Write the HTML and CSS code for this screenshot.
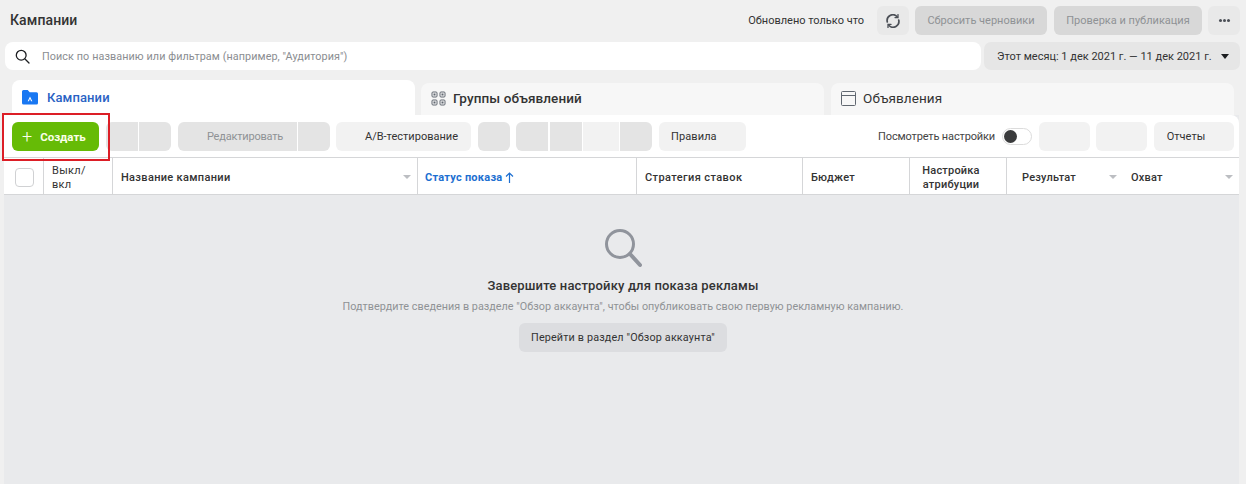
FILE: index.html
```html
<!DOCTYPE html>
<html lang="ru">
<head>
<meta charset="utf-8">
<title>Кампании</title>
<link rel="stylesheet" href="styles.css">
</head>
<body>
<header class="topbar">
  <h1 class="title">Кампании</h1>
  <div class="top-actions">
    <span class="updated">Обновлено только что</span>
    <button class="btn btn-soft btn-refresh" aria-label="Обновить">
      <svg width="14" height="14" viewBox="0 0 14 14" fill="none" stroke="#4b4f56" stroke-width="1.700" stroke-linecap="round"><path d="M1.300 8A5.800 5.800 0 0 1 11 2.500"/><path d="M12.700 6A5.800 5.800 0 0 1 3 11.500"/><path d="M12 .6v3H9" stroke-width="1.300"/><path d="M2 13.400v-3h3" stroke-width="1.300"/></svg>
    </button>
    <button class="btn btn-disabled btn-reset">Сбросить черновики</button>
    <button class="btn btn-disabled btn-publish">Проверка и публикация</button>
    <button class="btn btn-soft btn-more" aria-label="Ещё"><span class="dots"></span></button>
  </div>
</header>

<div class="searchrow">
  <div class="search">
    <svg class="search-icon" width="15" height="15" viewBox="0 0 15 15" fill="none" stroke="#1c1e21" stroke-width="1.300" stroke-linecap="round"><circle cx="6.200" cy="6.200" r="4.900"/><path d="M10 10l4 4"/></svg>
    <span class="search-text">Поиск по названию или фильтрам (например, "Аудитория")</span>
  </div>
  <div class="daterange">
    <span>Этот месяц: 1 дек 2021 г. — 11 дек 2021 г.</span>
    <span class="caret-dark"></span>
  </div>
</div>

<nav class="tabs">
  <div class="tab tab-active">
    <svg width="18" height="16" viewBox="0 0 18 16"><path d="M1 2.500A1.500 1.500 0 0 1 2.500 1h4.200l2 2.200h6.800A1.500 1.500 0 0 1 17 4.700v9.300a1.500 1.500 0 0 1-1.500 1.500h-13A1.500 1.500 0 0 1 1 14z" fill="#1877f2"/><path d="M9 7.500l2.300 4.800h-1.200l-1.100-2.500-1.100 2.500H6.700z" fill="#fff"/></svg>
    <span>Кампании</span>
  </div>
  <div class="tab tab-second">
    <svg width="15" height="15" viewBox="0 0 15 15" fill="none" stroke="#606770" stroke-width="1"><rect x="1" y="1" width="5" height="5" rx="1"/><rect x="9" y="1" width="5" height="5" rx="1"/><rect x="1" y="9" width="5" height="5" rx="1"/><rect x="9" y="9" width="5" height="5" rx="1"/><rect x="3" y="3" width="1" height="1" fill="#606770"/><rect x="11" y="3" width="1" height="1" fill="#606770"/><rect x="3" y="11" width="1" height="1" fill="#606770"/><rect x="11" y="11" width="1" height="1" fill="#606770"/></svg>
    <span>Группы объявлений</span>
  </div>
  <div class="tab tab-third">
    <svg width="15" height="15" viewBox="0 0 15 15" fill="none" stroke="#606770" stroke-width="1"><rect x=".5" y=".5" width="14" height="14" rx="1"/><path d="M1 4.500h13"/></svg>
    <span>Объявления</span>
  </div>
</nav>

<section class="panel">
  <div class="toolbar">
    <button class="btn btn-create"><span class="plus">+</span>Создать</button>
    <div class="group group-a"><span class="seg w32 dark"></span><span class="seg w32 dark"></span></div>
    <div class="group group-b"><button class="seg w119 dark seg-text">Редактировать</button><span class="seg w32 dark"></span></div>
    <button class="btn btn-light btn-ab">A/B-тестирование</button>
    <span class="seg w32 dark single"></span>
    <div class="group group-c"><span class="seg w32 dark"></span><span class="seg w32 dark seg-gap"></span><span class="seg w36 pale"></span><span class="seg w32 dark"></span></div>
    <button class="btn btn-light btn-rules">Правила</button>
    <div class="toolbar-right">
      <span class="view-label">Посмотреть настройки</span>
      <span class="toggle"><span class="knob"></span></span>
      <span class="seg w51 pale single slot-a"></span>
      <span class="seg w51 pale single slot-b"></span>
      <button class="btn btn-light btn-reports">Отчеты</button>
    </div>
  </div>

  <div class="thead">
    <div class="th th-check"><span class="checkbox"></span></div>
    <div class="th th-toggle">Выкл/<br>вкл</div>
    <div class="th th-name">Название кампании<span class="sort"></span></div>
    <div class="th th-status">Статус показа
      <svg width="9" height="11" viewBox="0 0 9 11" fill="none" stroke="#1d6fd1" stroke-width="1.200"><path d="M4.500 11V1M1 4.500l3.500-3.500 3.500 3.500"/></svg>
    </div>
    <div class="th th-strategy">Стратегия ставок</div>
    <div class="th th-budget">Бюджет</div>
    <div class="th th-attr">Настройка<br>атрибуции</div>
    <div class="th th-result">Результат<span class="sort"></span></div>
    <div class="th th-reach">Охват<span class="sort"></span></div>
  </div>

  <div class="empty">
    <svg class="empty-icon" width="38" height="40" viewBox="0 0 38 40" fill="none" stroke="#90949c" stroke-linecap="round"><circle cx="16" cy="16" r="13.500" stroke-width="3"/><path d="M26 26l10 11" stroke-width="4"/></svg>
    <h2 class="empty-title">Завершите настройку для показа рекламы</h2>
    <p class="empty-text">Подтвердите сведения в разделе "Обзор аккаунта", чтобы опубликовать свою первую рекламную кампанию.</p>
    <button class="btn btn-overview">Перейти в раздел "Обзор аккаунта"</button>
  </div>
  <div class="highlight"></div>
</section>
</body>
</html>
```
FILE: styles.css
```css
* { box-sizing: border-box; }
html, body { margin: 0; padding: 0; }
body {
  width: 1246px;
  height: 484px;
  overflow: hidden;
  background: #f0f0f0;
  font-family: Roboto, "Liberation Sans", Arial, sans-serif;
  font-size: 11px;
  color: #1c1e21;
  position: relative;
}
button { font: inherit; border: 0; padding: 0; }
.btn { display: inline-flex; align-items: center; justify-content: center; height: 29px; border-radius: 6px; }

.topbar { height: 42px; display: flex; align-items: flex-start; justify-content: space-between; padding: 6px 6px 0 10px; }
.title { margin: 5px 0 0; font-size: 14px; line-height: 18px; font-weight: 500; color: #333; letter-spacing: .1px; }
.top-actions { display: flex; align-items: center; height: 29px; }
.updated { font-size: 11px; color: #333; margin-right: 13px; }
.btn-soft { background: #e9e9e9; width: 32px; }
.btn-refresh { margin-right: 6px; }
.btn-disabled { background: #d8d8d8; color: #8f9295; }
.btn-reset { width: 132px; margin-right: 7px; }
.btn-publish { width: 148px; margin-right: 6px; }
.dots { width: 3px; height: 3px; border-radius: 50%; background: #4b4f56; box-shadow: -4px 0 #4b4f56, 4px 0 #4b4f56; }

.searchrow { display: flex; padding: 0 6px 0 5px; gap: 3px; height: 28px; }
.search { width: 976px; background: #fff; border-radius: 8px; display: flex; align-items: center; padding-left: 10px; }
.search-text { margin-left: 12px; color: #8a8d91; font-size: 10.800px; letter-spacing: .09px; }
.daterange { flex: 1; background: #e6e6e6; border-radius: 7px; display: flex; align-items: center; padding-left: 13px; color: #333; font-size: 11px; }
.caret-dark { margin-left: 9px; border: 4.500px solid transparent; border-top: 5px solid #1c1e21; border-bottom: 0; }

.tabs { display: flex; align-items: flex-start; height: 45px; padding: 10px 0 0 12px; }
.tab { height: 35px; width: 403px; border-radius: 8px 8px 0 0; display: flex; align-items: center; font-size: 13.500px; font-weight: 500; letter-spacing: .1px; }
.tab-active { background: #fff; color: #2a62c4; padding: 0 0 1px 9px; gap: 8px; font-size: 13px; }
.tab-second { background: #f7f7f7; margin: 3px 0 0 6px; height: 32px; padding: 0 0 2px 10px; gap: 7px; color: #333; }
.tab-third { background: #f7f7f7; margin: 3px 0 0 7px; height: 32px; padding: 0 0 2px 10px; gap: 7px; color: #333; font-weight: 400; }

.panel { position: relative; margin-left: 4px; width: 1235px; height: 369px; background: #e9eaec; }
.toolbar { height: 42px; background: #fff; border-radius: 0 8px 0 0; display: flex; align-items: center; padding: 1px 5px 0 8px; }
.btn-create { width: 87px; background: #66bb06; color: #fbffe8; font-weight: 700; font-size: 11.500px; margin-right: 7px; justify-content: flex-start; padding-left: 10px; }
.plus { font-size: 18px; font-weight: 300; line-height: 1; margin-right: 8px; }
.group { display: flex; gap: 1px; height: 29px; }
.group .seg:first-child { border-radius: 6px 0 0 6px; }
.group .seg:last-child { border-radius: 0 6px 6px 0; }
.seg { display: block; height: 29px; flex: none; }
.seg-gap { margin-left: 1px; }
.single { border-radius: 6px; }
.dark { background: #e4e4e4; }
.pale { background: #f2f2f2; }
.w32 { width: 32px; }
.w36 { width: 36px; }
.w51 { width: 51px; }
.w119 { width: 119px; }
.seg-text { color: #8f9295; padding-left: 15px; letter-spacing: -.2px; }
.group-a { margin-right: 7px; }
.group-b { margin-right: 6px; }
.btn-light { background: #f2f2f2; color: #333; }
.btn-ab { width: 135px; margin-right: 7px; padding-left: 16px; }
.toolbar > .single { margin-right: 6px; }
.group-c { margin-right: 7px; }
.btn-rules { width: 87px; justify-content: flex-start; padding-left: 12px; letter-spacing: .1px; }
.toolbar-right { margin-left: auto; display: flex; align-items: center; }
.view-label { color: #444; margin-right: 7px; letter-spacing: -.15px; }
.toggle { width: 30px; height: 17px; border: 1px solid #dcdcdc; border-radius: 9px; background: #fff; padding: 1px; margin-right: 7px; }
.knob { display: block; width: 13px; height: 13px; border-radius: 50%; background: #3a3b3c; }
.slot-a { margin-right: 6px; }
.slot-b { margin-right: 7px; }
.btn-reports { width: 80px; padding-right: 16px; }

.thead { display: flex; height: 38px; background: #fff; border-top: 1px solid #d5d6d8; border-bottom: 1px solid #d5d6d8; font-size: 11px; font-weight: 500; color: #333; letter-spacing: .2px; }
.th { position: relative; display: flex; align-items: center; flex: none; border-right: 1px solid #d5d6d8; padding-top: 3px; padding-left: 8px; line-height: 14px; }
.th-check { width: 40px; padding-left: 11px; padding-top: 2px; }
.checkbox { width: 19px; height: 19px; border: 1px solid #d0d1d3; border-radius: 4px; background: #fff; }
.th-toggle { width: 69px; font-weight: 400; display: block; padding-top: 6px; letter-spacing: .3px; }
.th-name { width: 305px; letter-spacing: .32px; }
.th-status { width: 219px; color: #1d6fd1; font-weight: 700; gap: 3px; padding-left: 7px; letter-spacing: .25px; }
.th-strategy { width: 166px; letter-spacing: .4px; }
.th-budget { width: 107px; }
.th-attr { width: 97px; display: block; text-align: center; padding: 6px 14px 0 0; }
.th-result { width: 116px; padding-left: 15px; border-right: 0; }
.th-reach { flex: 1; border-right: 0; }
.sort { position: absolute; right: 6px; top: 17px; border: 4px solid transparent; border-top: 4px solid #bcbec2; border-bottom: 0; }

.empty { display: flex; flex-direction: column; align-items: center; padding-top: 33px; width: 1238px; }
.empty-icon { margin-bottom: 10px; }
.empty-title { margin: 0; font-size: 13px; line-height: 16px; font-weight: 500; color: #333; letter-spacing: .15px; }
.empty-text { margin: 6px 0 0; font-size: 10.800px; line-height: 13px; color: #8f9295; letter-spacing: .03px; }
.btn-overview { margin-top: 10px; width: 208px; background: #dcdde0; color: #333; font-size: 10.800px; letter-spacing: .15px; }

.highlight { position: absolute; left: -2px; top: -2px; width: 108px; height: 48px; border: 2px solid #dc1e26; pointer-events: none; }
```
